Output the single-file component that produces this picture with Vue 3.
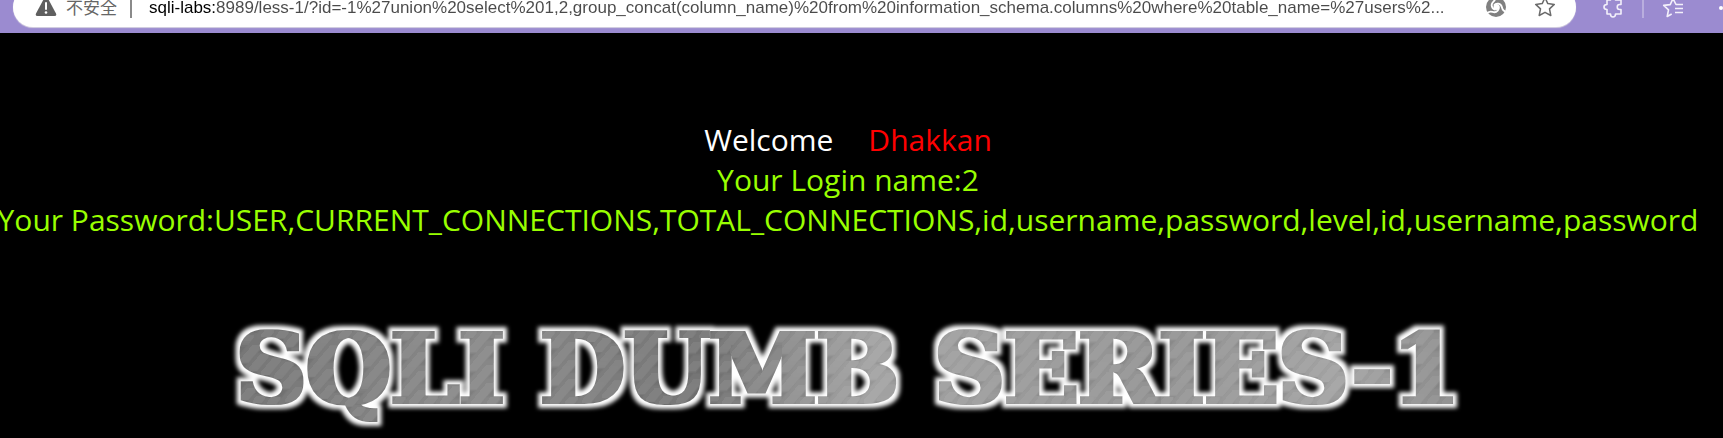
<script setup>
import { ref } from 'vue'

const address = ref(
  'sqli-labs:8989/less-1/?id=-1%27union%20select%201,2,group_concat(column_name)%20from%20information_schema.columns%20where%20table_name=%27users%2...'
)
const loginName = '2'
const columns = [
  'USER', 'CURRENT_CONNECTIONS', 'TOTAL_CONNECTIONS', 'id', 'username',
  'password', 'level', 'id', 'username', 'password'
]
const titleWords = ['SQLI', 'DUMB', 'SERIES-1']
</script>

<template>
  <div class="window">
    <header class="toolbar">
      <div class="omnibox">
        <button class="security" type="button">
          <svg class="warn" viewBox="0 0 22 22" aria-hidden="true">
            <path d="M9.2 2.2Q11 -.6 12.8 2.2L21 17.4Q22 20 19.4 20H2.6Q0 20 1 17.4Z" fill="#5f5f5f" />
            <path d="M11 7v6" stroke="#fff" stroke-width="2" stroke-linecap="round" />
            <circle cx="11" cy="16.5" r="1.3" fill="#fff" />
          </svg>
          <span>不安全</span>
        </button>
        <span class="rule"></span>
        <input v-model="address" class="address" type="text" aria-label="Address" spellcheck="false" />
        <button class="icon" type="button" aria-label="Page tools">
          <svg viewBox="0 0 22 22" aria-hidden="true">
            <circle cx="11" cy="11" r="10" fill="#808080" />
            <circle cx="11.5" cy="11" r="3" fill="#fff" />
            <g fill="none" stroke="#fff" stroke-width="1.8">
              <path d="M9 9.5C11 6.5 16 7 17 11.5 17.5 14 19 15.5 22 16" />
              <path d="M9 9.5C11 6.5 16 7 17 11.5 17.5 14 19 15.5 22 16" transform="rotate(120 11 11)" />
              <path d="M9 9.5C11 6.5 16 7 17 11.5 17.5 14 19 15.5 22 16" transform="rotate(240 11 11)" />
            </g>
          </svg>
        </button>
        <button class="icon star" type="button" aria-label="Add to favorites">
          <svg viewBox="0 0 22 22" aria-hidden="true">
            <path d="M11 1.6l2.8 6 6.5.8-4.8 4.5 1.3 6.6L11 16.3l-5.8 3.2 1.3-6.6L1.7 8.4l6.5-.8z" fill="none" stroke="#6b6b6b" stroke-width="1.5" stroke-linejoin="round" />
          </svg>
        </button>
      </div>
      <button class="icon" type="button" aria-label="Extensions">
        <svg viewBox="0 0 22 22" aria-hidden="true">
          <path d="M5 3h3.5c0-3.5 5-3.5 5 0H19v4.5h-1.5c-3 0-3 5 0 5H19V17h-5.500c0 4-5 4-5 0H5v-4.500c-4 0-4-5 0-5z" fill="none" stroke="#f3f0fa" stroke-width="1.6" stroke-linejoin="round" />
        </svg>
      </button>
      <span class="rule pale"></span>
      <button class="icon" type="button" aria-label="Favorites">
        <svg viewBox="0 0 22 22" aria-hidden="true">
          <path d="M21 7.5h-7L11 1.6 8.2 7.6l-6.500.8 4.800 4.500-1.300 6.600 4.500-2.500M13 11.500h8M13 15.500h8" fill="none" stroke="#f3f0fa" stroke-width="1.6" stroke-linejoin="round" />
        </svg>
      </button>
      <button class="more" type="button" aria-label="More"><span></span></button>
    </header>

    <main class="page">
      <div class="messages">
        <p class="welcome"><span>Welcome</span><span class="user">Dhakkan</span></p>
        <p>Your Login name:{{ loginName }}</p>
        <p>Your Password:{{ columns.join(',') }}</p>
      </div>
      <h1 class="title">
        <span v-for="word in titleWords" :key="word">{{ word }}</span>
      </h1>
      <svg class="defs" width="0" height="0" aria-hidden="true">
        <filter id="metal" x="-5%" y="-30%" width="110%" height="160%" color-interpolation-filters="sRGB">
          <feMorphology in="SourceGraphic" operator="dilate" radius="3 1" result="face" />
          <feMorphology in="SourceAlpha" operator="dilate" radius="7 5" result="wide" />
          <feGaussianBlur in="wide" stdDeviation="2" result="soft" />
          <feFlood flood-color="#fff" />
          <feComposite in2="soft" operator="in" result="glow" />
          <feMerge>
            <feMergeNode in="glow" />
            <feMergeNode in="face" />
          </feMerge>
        </filter>
      </svg>
    </main>
  </div>
</template>

<style>
body {
  margin: 0;
  background: #000;
}
</style>

<style scoped>
.window {
  min-height: 100vh;
  overflow: hidden;
  background: #000;
  font-family: "Open Sans", "Noto Sans CJK SC", sans-serif;
}
.toolbar {
  display: flex;
  align-items: flex-end;
  height: 33px;
  padding-left: 13px;
  overflow: hidden;
  background: #9b8bd0;
  box-sizing: border-box;
}
button {
  padding: 0;
  border: 0;
  background: none;
  font: inherit;
  color: inherit;
}
.omnibox {
  display: flex;
  flex: 1;
  align-items: center;
  min-width: 0;
  height: 40px;
  margin-bottom: 6px;
  padding: 0 20px 0 22px;
  border-radius: 20px;
  background: #fff;
  box-shadow: 0 1px 1px #d8d4e2;
  box-sizing: border-box;
}
.security {
  display: flex;
  align-items: center;
  gap: 9px;
  color: #666;
  font-family: "Noto Sans CJK SC", sans-serif;
  font-size: 17px;
  font-weight: 400;
  line-height: 24px;
  white-space: nowrap;
}
.warn {
  width: 22px;
  height: 22px;
}
.rule {
  flex: none;
  width: 2px;
  height: 22px;
  margin: 0 17px 0 13px;
  background: #8a8a8a;
}
.address {
  flex: 1;
  min-width: 0;
  height: 40px;
  padding: 2px 0 0;
  border: 0;
  outline: 0;
  background: linear-gradient(90deg, #000 66px, #4a4a4a 66px);
  background-clip: text;
  color: transparent;
  font-family: "Liberation Sans", sans-serif;
  font-size: 17px;
  box-sizing: border-box;
}
.icon {
  display: block;
  flex: none;
  width: 22px;
  height: 22px;
}
.icon svg {
  display: block;
  width: 22px;
  height: 22px;
}
.star {
  margin-left: 27px;
}
.toolbar > .icon {
  margin: 0 0 14px 26px;
}
.pale {
  height: 22px;
  margin: 0 -8px 15px 18px;
  background: #b9aede;
}
.more {
  flex: none;
  width: 4px;
  height: 22px;
  margin: 0 0 14px 35px;
}
.more span {
  display: block;
  width: 4px;
  height: 4px;
  border-radius: 2px;
  background: #fff;
}
.page {
  display: flex;
  flex-direction: column;
  align-items: center;
  padding: 87px 27px 0 0;
}
.messages {
  display: flex;
  flex-direction: column;
  align-items: center;
  width: 100%;
  color: #9f0;
  font-size: 30px;
  line-height: 40px;
}
.messages p {
  margin: 0;
  white-space: nowrap;
}
.messages .welcome {
  display: flex;
  gap: 35px;
  color: #fff;
}
.messages .user {
  color: #f00;
}
.title {
  display: flex;
  gap: 36px;
  margin: 73px 0 0;
  font-family: "DejaVu Serif", serif;
  font-size: 97px;
  font-weight: 700;
  line-height: 112px;
  white-space: nowrap;
  color: transparent;
  background:
    repeating-linear-gradient(130deg, #fff1 0 2px, #0001 4px 7px, #fff0 9px 12px),
    linear-gradient(100deg, #757575, #888 20%, #757575 38%, #a2a2a2 52%, #929292 75%, #a2a2a2 90%, #888);
  background-clip: text;
  filter: url(#metal);
}
.defs {
  position: absolute;
}
</style>
